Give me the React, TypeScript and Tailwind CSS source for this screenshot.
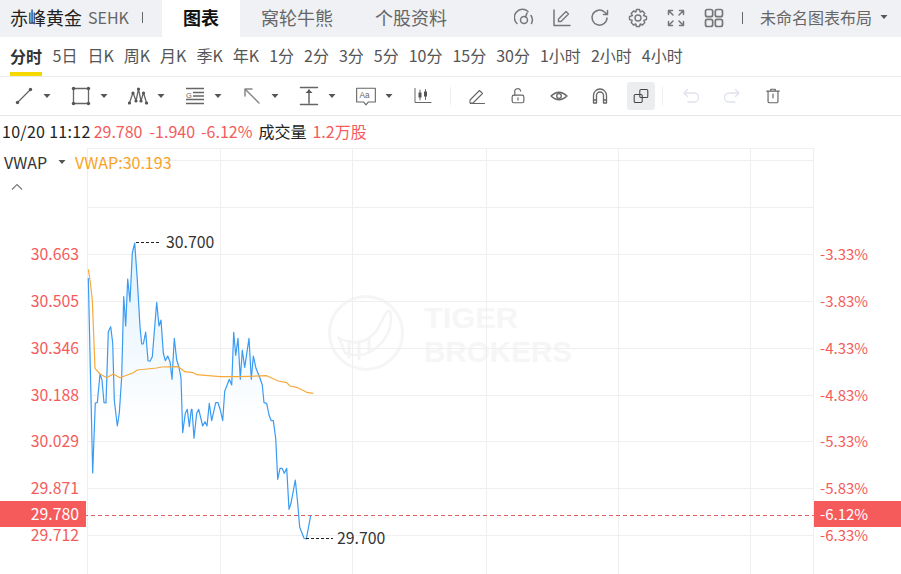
import React from "react";

const price = "88.3,278 92.7,473 95.3,403 97.3,402.7 100,374 102,380 104,402.7 106,403 108.3,331.7 110.7,326.7 112.7,343 114.3,400 117.3,426 119.3,413 121.7,376.7 123.7,296.7 125.7,326 127.7,279 130,301.7 132.3,253 134.7,243 137.3,280 140,326.7 141.7,344 143.3,344 145.7,332 148,360.7 150,361.3 152.3,356.7 156.7,302.3 159,326 161,320 163.3,353 165.3,360.7 167.7,356 170,361.7 172,379.3 174.3,338.3 176.7,360 179,367.3 181,378 182.7,432.7 185.3,413.3 187.3,409.3 189.3,426.7 191.3,409.3 192,409.3 194,438.3 196.7,413.3 198.7,409.3 202.7,426 205,421.7 207,426 209.3,403.3 211.7,420.7 215.7,402.7 218,402.7 220.3,410 222.7,420.7 224.7,391.3 229.3,379.3 231.7,385 233.7,332.3 235.7,355.3 238,338.3 240.3,379.3 242.3,350 244.7,367.3 249,338.3 251.3,379.3 253.3,356 256,368.3 260,378.3 262.3,385 264,402.7 266.7,403.3 269,415 271.3,420.7 273.3,420.7 275.7,438.3 277.7,479.3 280,468.3 282,468.3 284.3,473.3 286.7,468.3 289,509.3 291,503.3 295.3,480 297.7,503.3 299.7,527.3 304,538.3 306.3,539 310.7,515.7";
const vwap = "88.3,269.3 90,280 92.3,300 95,368.3 100,374 106.7,377.7 113.3,374 120,377.7 133.3,372.7 137.3,370 156.7,368 161.7,367 178.3,366.7 185,371.7 193.3,372.7 196.7,374.7 220,376.7 240,376.7 266.7,375.7 278.3,381 286.7,382.7 290,386 296.7,387.3 306.7,392.3 313.3,393.3";
const hLines = [148.5, 160.5, 207.5, 254.5, 301.5, 348.5, 395.5, 441.5, 488.5, 535.5];
const vLines = [87.5, 220.5, 352.5, 486.5, 618.5, 750.5, 813.5];
const left: [string, number][] = [["30.663", 260], ["30.505", 307], ["30.346", 354], ["30.188", 401], ["30.029", 447], ["29.871", 494], ["29.712", 541]];
const right: [string, number][] = [["-3.33%", 260], ["-3.83%", 307], ["-4.33%", 354], ["-4.83%", 401], ["-5.33%", 447], ["-5.83%", 494], ["-6.33%", 541]];
const frames = ["5日", "日K", "周K", "月K", "季K", "年K", "1分", "2分", "3分", "5分", "10分", "15分", "30分", "1小时", "2小时", "4小时"];

const Caret = () => (
  <svg width="14" height="8" viewBox="0 0 14 8"><path d="M3.5 2h7L7 6z" fill="#555" /></svg>
);

const Ico = ({ children, size = 20 }: { children: React.ReactNode; size?: number }) => (
  <svg width={size} height={size} viewBox="0 0 20 20" fill="none" stroke="currentColor" strokeWidth="1.3" strokeLinecap="round" strokeLinejoin="round">
    {children}
  </svg>
);

const tools: React.ReactNode[] = [
  <Ico><path d="M3.5 16.5L16.5 3.5" /><circle cx="3.5" cy="16.5" r="1.7" fill="#555" stroke="none" /><circle cx="16.5" cy="3.5" r="1.7" fill="#555" stroke="none" /></Ico>,
  <Ico><rect x="2.5" y="2.5" width="15" height="15" /><g fill="#555" stroke="none"><circle cx="2.5" cy="2.5" r="1.7" /><circle cx="17.5" cy="2.5" r="1.7" /><circle cx="2.5" cy="17.5" r="1.7" /><circle cx="17.5" cy="17.5" r="1.7" /></g></Ico>,
  <Ico><path d="M1.5 17L5 6.5 8 15 10.5 3 13 15 15.5 6.5 18.5 17" /><g fill="#555" stroke="none"><circle cx="1.5" cy="17" r="1.6" /><circle cx="5" cy="7" r="1.6" /><circle cx="8" cy="15" r="1.6" /><circle cx="10.5" cy="3" r="1.6" /><circle cx="13" cy="15" r="1.6" /><circle cx="15.5" cy="7" r="1.6" /><circle cx="18.5" cy="17" r="1.6" /></g></Ico>,
  <Ico><path d="M1 2.5H19M8 6.5H19M8 10H19M1 13.5H19M1 17.5H19" strokeLinecap="butt" /><text x="1" y="12" fontSize="7.5" stroke="none" fill="#666" fontFamily="'Liberation Sans',sans-serif">G</text></Ico>,
  <Ico><path d="M3 3L17 17M3 3V10M3 3H10" strokeWidth="1.5" stroke="#888" /></Ico>,
  <Ico><path d="M1.5 1.5H18.5M1.5 18.5H18.5M10 4V17" strokeWidth="1.5" /><path d="M6.5 7L10 3.5 13.5 7z" fill="#555" stroke="none" /></Ico>,
  <Ico size={22}><path d="M1.5 3H18.5V15.5H12L10 18 8 15.5H1.5z" strokeWidth="1" /><text x="4" y="12" fontSize="7.5" stroke="none" fill="#666" fontFamily="'Liberation Sans',sans-serif">Aa</text></Ico>,
  <Ico><path d="M2 2.5V16.5H18" strokeWidth="1" /><path d="M7 4V14M12.5 3.5V13.5" strokeWidth="1" /><rect x="5.5" y="6.5" width="3" height="5" fill="#555" stroke="none" /><rect x="11" y="5.5" width="3" height="5" fill="#555" stroke="none" /></Ico>,
];

const Pencil = () => (
  <Ico><path d="M3 14L12.5 4.5 15.5 7.5 6 17H3zM3.5 17.5H17.5" strokeWidth="1.1" /></Ico>
);

const Chart = () => (
  <svg className="block" width="901" height="426" viewBox="0 148 901 426" style={{ fontFamily: "'Noto Sans CJK SC',sans-serif" }}>
    <defs>
      <linearGradient id="area" x1="0" y1="243" x2="0" y2="425" gradientUnits="userSpaceOnUse">
        <stop offset="0" stopColor="#dff1fd" />
        <stop offset="1" stopColor="#ffffff" />
      </linearGradient>
      <clipPath id="aclip"><rect x="87" y="240" width="230" height="186" /></clipPath>
    </defs>
    {/* watermark */}
    <g fill="#f6f6f7" stroke="none">
      <circle cx="366" cy="333" r="36.5" fill="none" stroke="#f5f5f6" strokeWidth="3" />
      <path d="M339 338Q362 350 377 330L386 313Q391 307 391 318 391 338 372 351 360 358 345 353z" fill="none" stroke="#f4f4f5" strokeWidth="2.5" />
      <path d="M349 340V358M359 342V360M369 338V352" fill="none" stroke="#f4f4f5" strokeWidth="3" />
      <text x="424" y="328" fontSize="30" fontWeight="700" fontFamily="'Liberation Sans',sans-serif" textLength="94" lengthAdjust="spacingAndGlyphs">TIGER</text>
      <text x="424" y="362" fontSize="30" fontWeight="700" fontFamily="'Liberation Sans',sans-serif" textLength="148" lengthAdjust="spacingAndGlyphs">BROKERS</text>
    </g>
    {hLines.map((y) => <line key={y} x1="87" x2="813.5" y1={y} y2={y} stroke="#efefef" />)}
    {vLines.map((x) => <line key={x} x1={x} x2={x} y1="148" y2="574" stroke="#efefef" />)}
    <polygon points={`88.3,430 ${price} 310.7,430`} fill="url(#area)" clipPath="url(#aclip)" />
    <polyline points={price} fill="none" stroke="#3a9bf3" strokeWidth="1.2" strokeLinejoin="round" />
    <polyline points={vwap} fill="none" stroke="#f8a93a" strokeWidth="1.2" strokeLinejoin="round" />
    <line x1="0" x2="901" y1="515.5" y2="515.5" stroke="#e0605f" strokeDasharray="4 3" />
    <rect x="0" y="501" width="86" height="26" fill="#f55b5b" />
    <rect x="814" y="501" width="87" height="26" fill="#f55b5b" />
    <g fontSize="15.8" fill="#f55b5b">
      {left.map(([t, y]) => <text key={t} x="79" y={y} textAnchor="end">{t}</text>)}
      {right.map(([t, y]) => <text key={t} x="820" y={y} fontSize="15">{t}</text>)}
    </g>
    <text x="79" y="520" textAnchor="end" fontSize="15.8" fill="#fff">29.780</text>
    <text x="820" y="520" fontSize="15" fill="#fff">-6.12%</text>
    <line x1="136" x2="161" y1="242.5" y2="242.5" stroke="#222" strokeDasharray="3 2" />
    <text x="166" y="248" fontSize="15.8" fill="#333">30.700</text>
    <line x1="306" x2="333" y1="538.5" y2="538.5" stroke="#222" strokeDasharray="3 2" />
    <text x="337" y="544" fontSize="15.8" fill="#333">29.700</text>
  </svg>
);

export default function App() {
  return (
    <div className="flex h-[574px] w-[901px] flex-col overflow-hidden bg-white text-[#333] font-['Noto_Sans_CJK_SC',sans-serif]">
      {/* Header */}
      <div className="flex h-[37px] shrink-0 items-center bg-[#eff1f5]">
        <span className="ml-[10px] pb-[3px] text-[18px] leading-none text-[#222]">赤峰黄金</span>
        <span className="ml-[6px] pb-[3px] text-[16px] leading-none text-[#666]">SEHK</span>
        <span className="ml-[13px] mb-[3px] h-[11px] w-px bg-[#666]" />
        <div className="ml-[19px] flex h-full w-[78px] items-center justify-center bg-white pb-[3px] text-[18px] font-bold text-[#111]">图表</div>
        <span className="ml-[21px] pb-[3px] text-[18px] leading-none text-[#666]">窝轮牛熊</span>
        <span className="ml-[42px] pb-[3px] text-[18px] leading-none text-[#666]">个股资料</span>
        <div className="ml-[58px] mb-[2px] flex items-center text-[#777]">
          {[
            <Ico><path d="M3 15.5A8 8 0 0 1 14 3.5M17 7.5A8 8 0 0 1 17.5 15.5" strokeWidth="1.5" /><circle cx="10" cy="12" r="3.5" strokeWidth="1.5" /><path d="M11.5 9L13 5" strokeWidth="1.5" /></Ico>,
            <Ico><path d="M2 2V17.5H18" strokeWidth="1.5" /><path d="M6.5 13.5V11L14 3.5 16.5 6 9 13.5z" strokeWidth="1.4" /></Ico>,
            <Ico><path d="M17 10A7.5 7.5 0 1 1 14.5 4L17.5 6.5M17.5 2.5V6.5H13.5" strokeWidth="1.5" /></Ico>,
            <Ico><path d="M8.5 1.5H11.5L12.2 4 14.5 3 16.8 5.5 15.5 7.6 18.5 8.5V11.5L15.8 12.4 16.8 14.5 14.5 17 12.2 16 11.5 18.5H8.5L7.8 16 5.5 17 3.2 14.5 4.2 12.4 1.5 11.5V8.5L4.5 7.6 3.2 5.5 5.5 3 7.8 4z" strokeWidth="1.4" /><circle cx="10" cy="10" r="3" strokeWidth="1.4" /></Ico>,
            <Ico><path d="M2.5 6.5V2.5H6.5M2.5 2.5L7 7M17.5 6.5V2.5H13.5M17.5 2.5L13 7M2.5 13.5V17.5H6.5M2.5 17.5L7 13M17.5 13.5V17.5H13.5M17.5 17.5L13 13" strokeWidth="1.5" /></Ico>,
            <Ico><g strokeWidth="1.7"><rect x="1.5" y="1.5" width="7.2" height="7.2" rx="2" /><rect x="11.3" y="1.5" width="7.2" height="7.2" rx="2" /><rect x="1.5" y="11.3" width="7.2" height="7.2" rx="2" /><rect x="11.3" y="11.3" width="7.2" height="7.2" rx="2" /></g></Ico>,
          ].map((ic, i) => (
            <div key={i} className="flex w-[38px] justify-center">{ic}</div>
          ))}
        </div>
        <span className="ml-[9px] mb-[2px] h-[12px] w-px bg-[#666]" />
        <span className="ml-[17px] pb-[3px] text-[16px] leading-none text-[#666]">未命名图表布局</span>
        <div className="ml-[5px] mb-[3px]"><Caret /></div>
      </div>

      {/* Time frames */}
      <div className="flex h-[40px] shrink-0 items-stretch border-b border-[#ececec] pl-[10px] text-[16px] text-[#555]">
        <div className="flex items-center border-b-[4px] border-[#f5d800] pt-[2px] font-bold text-[#333]">分时</div>
        <div className="ml-[10.5px] flex gap-[10px]">
          {frames.map((f) => (
            <div key={f} className="flex items-center pb-[3px] whitespace-nowrap">{f}</div>
          ))}
        </div>
      </div>

      {/* Drawing tools */}
      <div className="flex h-[39px] shrink-0 items-center border-b border-[#e6e6e6] pl-[8px] text-[#666]">
        {tools.slice(0, 7).map((ic, i) => (
          <div key={i} className="flex w-[57px] items-center">
            <div className="flex w-[32px] justify-center">{ic}</div>
            <Caret />
          </div>
        ))}
        <div className="flex w-[32px] justify-center">{tools[7]}</div>
        <span className="ml-[11px] h-[18px] w-px bg-[#eee]" />
        <div className="ml-[5.5px] flex items-center">
          <div className="flex w-[41px] justify-center"><Pencil /></div>
          <div className="flex w-[41px] justify-center"><Ico size={18}><rect x="3.5" y="9" width="13" height="8.5" rx="2" /><path d="M6.5 9V6A3.2 3.2 0 0 1 13 4.5M10 12V14.5" /></Ico></div>
          <div className="flex w-[41px] justify-center"><Ico><path d="M2 10Q10 2.5 18 10 10 17.5 2 10z" /><circle cx="10" cy="10" r="2.3" /></Ico></div>
          <div className="flex w-[41px] justify-center"><Ico><path d="M3.5 17V9.5A6.5 6.5 0 0 1 16.5 9.5V17H13.5V9.5A3.5 3.5 0 0 0 6.5 9.5V17z" /><path d="M3.5 14H6.5M13.5 14H16.5" /></Ico></div>
          <div className="mx-[6.5px] flex h-[28px] w-[28px] items-center justify-center rounded-[3px] bg-[#ebedee] text-[#444]"><Ico size={16}><rect x="1.5" y="8" width="10" height="10" rx="1.5" /><rect x="8.5" y="2" width="10" height="10" rx="1.5" /></Ico></div>
          <span className="h-[18px] w-px bg-[#eee]" />
          <div className="ml-[7.5px] flex w-[41px] justify-center text-[#dfe2ec]"><Ico><path d="M6.5 3.5L3 7 6.5 10.5M3 7H13A4.5 4.5 0 0 1 13 16H7" /></Ico></div>
          <div className="flex w-[41px] justify-center text-[#dfe2ec]"><Ico><path d="M13.5 3.5L17 7 13.5 10.5M17 7H7A4.5 4.5 0 0 0 7 16H13" /></Ico></div>
          <div className="flex w-[41px] justify-center"><Ico size={18}><path d="M3 4.5H17M7.5 4.5V2.5H12.5V4.5M4.5 4.5V16A1.5 1.5 0 0 0 6 17.5H14A1.5 1.5 0 0 0 15.5 16V4.5M10 8V12" /></Ico></div>
        </div>
      </div>

      {/* Quote line */}
      <div className="flex h-[32px] shrink-0 items-center whitespace-pre pb-[2px] pl-[2px] text-[16px] leading-none text-[#f55b5b]">
        <span className="tracking-[0.3px] text-[#222]">10/20 11:12</span>
        <span className="ml-[3px]">29.780</span>
        <span className="ml-[7px]">-1.940</span>
        <span className="ml-[6px]">-6.12%</span>
        <span className="ml-[6px] text-[#222]">成交量</span>
        <span className="ml-[6px]">1.2万股</span>
      </div>

      {/* Chart */}
      <div className="relative min-h-0 flex-1">
        <Chart />
        <div className="absolute left-[4px] top-[5px] flex items-center text-[16px] leading-[18px]">
          <span className="text-[#333]">VWAP</span>
          <span className="ml-[8px]"><Caret /></span>
          <span className="ml-[6px] text-[#f8a21f]">VWAP:30.193</span>
        </div>
        <svg className="absolute left-[10px] top-[34px] text-[#777]" width="14" height="10" viewBox="0 0 14 10" fill="none" stroke="currentColor" strokeWidth="1.1"><path d="M2 7.5L7 2.5 12 7.5" /></svg>
      </div>
    </div>
  );
}
